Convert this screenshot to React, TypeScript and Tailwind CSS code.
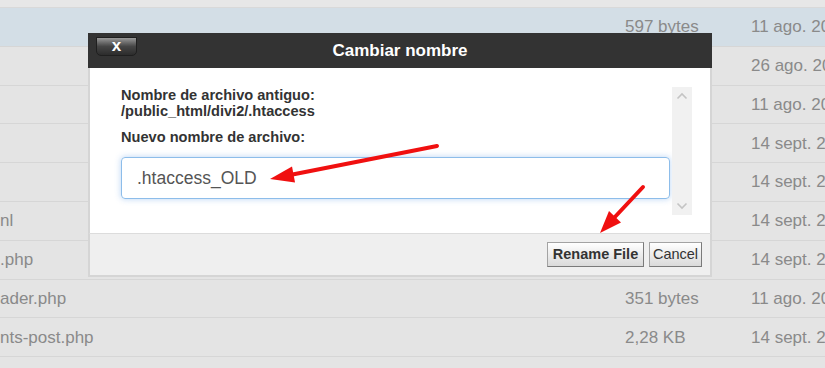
import React from 'react';

interface Row {
    name: string;
    size: string;
    date: string;
    active?: boolean;
}

const rows: Row[] = [
    { name: '', size: '597 bytes', date: '11 ago. 2021', active: true },
    { name: '', size: '', date: '26 ago. 2021' },
    { name: '', size: '', date: '11 ago. 2021' },
    { name: '', size: '', date: '14 sept. 2021' },
    { name: '', size: '', date: '14 sept. 2021' },
    { name: 'nl', size: '', date: '14 sept. 2021' },
    { name: '.php', size: '', date: '14 sept. 2021' },
    { name: 'ader.php', size: '351 bytes', date: '11 ago. 2021' },
    { name: 'nts-post.php', size: '2,28 KB', date: '14 sept. 2021' },
    { name: '', size: '', date: '' },
];

function Chevron({ up }: { up?: boolean }) {
    return (
        <svg width="12" height="8" viewBox="0 0 12 8" className="text-[#c4c4c4]">
            <path
                d={up ? 'M1.5 6.5 L6 2 L10.5 6.5' : 'M1.5 1.5 L6 6 L10.5 1.5'}
                fill="none"
                stroke="currentColor"
                strokeWidth="1.6"
            />
        </svg>
    );
}

export default function App() {
    return (
        <div className="relative w-[825px] h-[368px] overflow-hidden bg-[#e4e4e4] font-['Liberation_Sans',Arial,sans-serif]">
            {/* file list behind the dialog */}
            <div className="h-[8px] bg-[#e7e7e7] border-b border-[#d9d9d9]" />
            {rows.map((row, i) => (
                <div
                    key={i}
                    className={`grid grid-cols-[625px_126px_1fr] items-center h-[38.8px] border-b border-[#d6d6d6] text-[17px] text-[#8a8a8a] whitespace-nowrap ${row.active ? 'bg-[#d3dee6]' : 'bg-[#e4e4e4]'}`}
                >
                    <div className="overflow-hidden">{row.name}</div>
                    <div>{row.size}</div>
                    <div className="overflow-hidden">{row.date}</div>
                </div>
            ))}

            {/* rename dialog */}
            <div className="absolute left-[88px] top-[33px] w-[624px]">
                <div className="relative h-[35px] bg-[#333333] flex items-center justify-center">
                    <button className="absolute left-[8px] top-[4px] w-[41px] h-[19px] rounded-b-[5px] border border-[#1f1f1f] bg-gradient-to-b from-[#9a9a9a] via-[#454545] to-[#2c2c2c] text-white font-bold text-[17px] leading-[14px] flex items-center justify-center pb-[1px]">
                        x
                    </button>
                    <span className="text-white font-bold text-[17px]">Cambiar nombre</span>
                </div>

                <div className="flex h-[165px] bg-white border-x-2 border-[#d5d5d5] pl-[31px] pr-[18px]">
                    <div className="w-[549px] pt-[20px] text-[#333] font-bold text-[14.6px] leading-[15.5px]">
                        <div>Nombre de archivo antiguo:</div>
                        <div>/public_html/divi2/.htaccess</div>
                        <div className="mt-[11px]">Nuevo nombre de archivo:</div>
                        <input
                            readOnly
                            defaultValue=".htaccess_OLD"
                            className="mt-[11.5px] w-full h-[42px] rounded-[4px] border border-[#8dbdea] shadow-[0_0_6px_rgba(100,160,230,0.45)] pl-[15px] text-[17.5px] font-normal text-[#555] outline-none"
                        />
                    </div>
                    <div className="ml-[2px] mt-[19px] w-[20px] h-[128px] bg-[#f1f1f1] flex flex-col items-center justify-between py-[5px]">
                        <Chevron up />
                        <Chevron />
                    </div>
                </div>

                <div className="h-[44px] bg-[#efefef] border-x-2 border-b-2 border-t border-[#d5d5d5] border-t-[#dcdcdc] flex justify-end items-start gap-[5px] pt-[8px] pr-[8px]">
                    <button className="w-[97px] h-[25px] border border-[#a3a3a3] border-b-[#7a7a7a] border-r-[#7a7a7a] bg-gradient-to-b from-white to-[#dadada] text-[14.5px] font-bold text-[#333]">
                        Rename File
                    </button>
                    <button className="w-[53px] h-[25px] border border-[#a3a3a3] border-b-[#7a7a7a] border-r-[#7a7a7a] bg-gradient-to-b from-white to-[#dadada] text-[14.5px] text-[#333]">
                        Cancel
                    </button>
                </div>
            </div>

            {/* annotation arrows */}
            <svg className="absolute left-0 top-0 pointer-events-none" width="825" height="368" viewBox="0 0 825 368">
                <line x1="437" y1="146" x2="290" y2="175" stroke="#f01010" strokeWidth="4" strokeLinecap="round" />
                <polygon points="270,179 292,166.5 295,182.5" fill="#f01010" />
                <line x1="643" y1="187" x2="613" y2="219" stroke="#f01010" strokeWidth="4" strokeLinecap="round" />
                <polygon points="600,233 609,211 621,222.5" fill="#f01010" />
            </svg>
        </div>
    );
}
